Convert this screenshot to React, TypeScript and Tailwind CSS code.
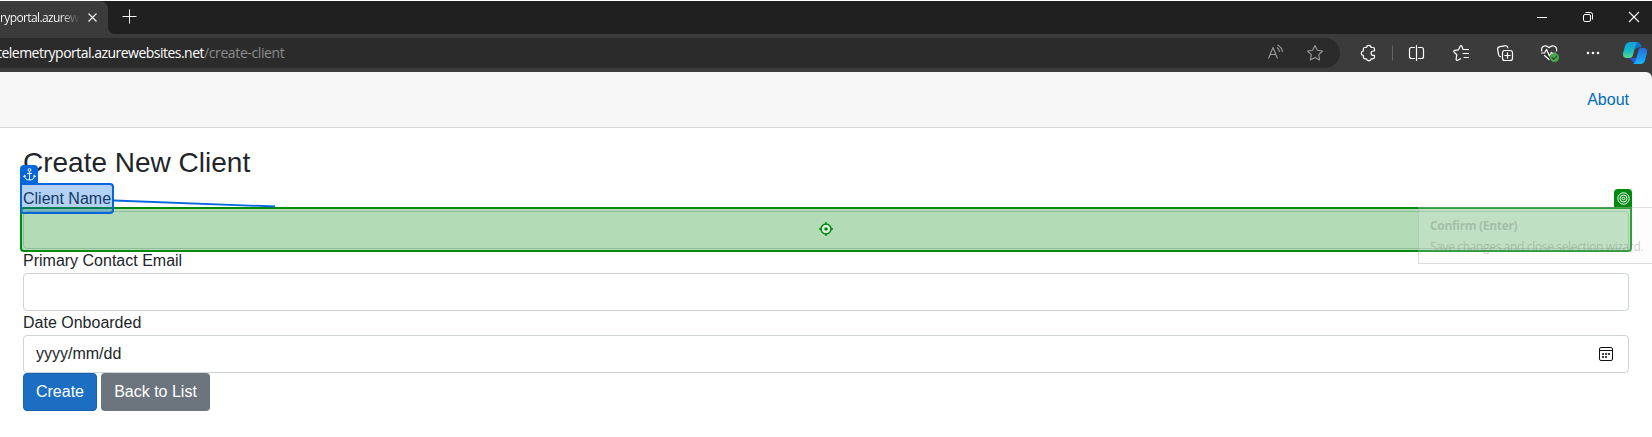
import React from "react";

function TabStrip() {
  return (
    <div className="relative flex h-[33px] bg-[#202020]">
      <div className="relative flex h-full w-[108px] items-center rounded-tr-lg bg-[#3b3b3b]">
        <span className="block h-[20px] w-[81px] bg-linear-to-r from-white from-75% to-[#3b3b3b] to-98% bg-clip-text font-['Open_Sans',sans-serif] text-[12px] leading-[20px] font-medium tracking-[-0.62px] whitespace-nowrap text-transparent">
          ryportal.azurew
        </span>
        <svg className="ml-[6px] h-[11px] w-[11px]" viewBox="0 0 11 11" fill="none" stroke="#eee" strokeWidth="1.2">
          <path d="M1.5 1.500l8 8M9.500 1.500l-8 8" />
        </svg>
      </div>
      <svg className="h-[33px] w-[40px]" viewBox="0 0 40 33" fill="none">
        <path d="M0 33V25Q0 33 8 33Z" fill="#3b3b3b" />
        <path d="M21.500 8.500v14M14.500 15.500h14" stroke="#f4f4f4" />
      </svg>
      <svg className="ml-auto h-[33px] w-[120px]" viewBox="0 0 120 33" fill="none" stroke="#fff">
        <path d="M5 16.500h10" />
        <rect x="51.500" y="13.500" width="7" height="7" rx="1.500" />
        <path d="M53.500 11.500h5q2 0 2 2v5" />
        <path d="M97 11l10 10M107 11l-10 10" strokeWidth="1.100" />
      </svg>
    </div>
  );
}

function Toolbar() {
  return (
    <div className="flex h-[38px] bg-[#3b3b3b] pt-1">
      <div className="flex h-[30px] w-[1340px] items-center rounded-r-full bg-[#2b2b2b]">
        <div className="-ml-[3px] font-['Open_Sans',sans-serif] text-[14px] leading-[30px] font-medium tracking-[-0.52px] whitespace-nowrap text-white">
          telemetryportal.azurewebsites.net<span className="font-normal tracking-[-0.38px] text-[#8b8b8b]">/create-client</span>
        </div>
        <svg className="ml-auto h-[30px] w-[80px] shrink-0" viewBox="0 0 80 30" fill="none" stroke="#9a9a9a" strokeWidth="1.100" strokeLinejoin="round">
          <path d="M8.500 20.500L13 9.500l4.500 11M10 16.500h6" />
          <path d="M17 9.500q2.300 1.500 2.500 4.500M17.500 7q4.500 2.300 5 7" />
          <path d="M55 7.500l2.300 4.800 5.200.7-3.800 3.700.9 5.300-4.600-2.500-4.600 2.500.9-5.300-3.800-3.700 5.200-.7z" />
        </svg>
      </div>
      <svg className="h-[34px] w-[312px]" viewBox="1340 38 312 34" fill="none" stroke="#fff" strokeWidth="1.200" strokeLinecap="round" strokeLinejoin="round">
        <path d="M1365 47.500h1.500q.2-2.200 2.300-2.200t2.300 2.200h1.700q1.700 0 1.700 1.700v1.800h-1.200a2.200 2.200 0 0 0 0 4.400h1.200v1.700q0 1.700-1.700 1.700h-1.700q-.2 2-2.300 2t-2.300-2H1365q-1.700 0-1.700-1.700v-1.700q-2-.2-2-2.200t2-2.200v-1.800q0-1.700 1.700-1.700z" />
        <path d="M1392.500 45.500v15" stroke="#626262" strokeLinecap="butt" strokeWidth="1" />
        <path d="M1413.500 47.500h-2q-2 0-2 2v7q0 2 2 2h2M1419.500 47.500h2q2 0 2 2v7q0 2-2 2h-2M1416.500 45.500v15M1413.500 47.500h1M1418.500 47.500h1M1413.500 58.500h1M1418.500 58.500h1" />
        <path d="M1463 49.500l-1-3q-1-2-2 0l-1.500 3.300-3.600.6q-2 .4-.7 1.800l2.600 2.500-.7 4.300q0 2 1.700 1.200l2.700-1.500M1464 49.500h4.500M1463 53.500h5.500M1464 57.500h4.500" strokeWidth="1.200" />
        <g strokeWidth="1.200">
          <rect x="1502.500" y="50.500" width="10" height="10" rx="2.300" />
          <path d="M1507.500 52.800v5.400M1504.800 55.500h5.400M1507.800 47.800q-.5-2.500-3-2l-5 .9q-2.500.5-2.100 3l.9 5q.4 2 2 2" />
        </g>
        <g strokeWidth="1.200">
          <path d="M1541.700 51q-.8-3.800 2.500-5 2.800-.7 4.800 1.700 2.200-2.400 5-1.700 3.300 1.200 2.500 5M1541.500 53h3l2-3.500 3 6.500 2-3.700 1 1h3M1544.500 55.500l4.500 4" />
          <circle cx="1554.500" cy="57.500" r="4.500" fill="#49a84c" stroke="none" />
          <path d="M1552.300 57.700l1.600 1.500 2.800-3" stroke="#214c24" />
        </g>
        <g fill="#fff" stroke="none">
          <circle cx="1588" cy="53" r="1.300" />
          <circle cx="1593" cy="53" r="1.300" />
          <circle cx="1598" cy="53" r="1.300" />
        </g>
        <g stroke="none">
          <path d="M1629.500 58h6.500l4.500 6h-4q-3 0-4-3z" fill="#2459dc" />
          <path d="M1633 42h4.500q2.500 0 3.300 2.500l1 3h-4q-2 0-2.800 2.500z" fill="#1471cb" />
          <path d="M1630.500 42h7.500q-1.800.8-2.500 3.500l-2.500 9.500q-.8 3-3.500 3h-3q-4.500-.5-3.300-5.500l2-7q1.200-3.500 5.300-3.500z" fill="url(#copilotLeft)" />
          <path d="M1640 48h4.500q3.300.6 2.500 5l-2 7.500q-1.300 3.500-4.500 3.500h-7.500q2-1 2.700-3.500l2.600-9.500q.7-3 1.700-3z" fill="url(#copilotRight)" />
        </g>
        <defs>
          <linearGradient id="copilotLeft" x1="0" y1="0" x2="0" y2="1">
            <stop stopColor="#12a1dc" />
            <stop offset=".5" stopColor="#13b5c5" />
            <stop offset="1" stopColor="#5bdb91" />
          </linearGradient>
          <linearGradient id="copilotRight" x1="0" y1="0" x2="0" y2="1">
            <stop stopColor="#266ade" />
            <stop offset="1" stopColor="#13b5fa" />
          </linearGradient>
        </defs>
      </svg>
    </div>
  );
}

function SelectionOverlay() {
  return (
    <>
      <div className="absolute top-[207px] left-[20px] flex h-[45px] w-[1612px] items-center justify-center rounded-[4px] rounded-tr-none border-2 border-[#008a0e] bg-[#008a0e]/30">
        <svg className="mb-px h-[14px] w-[14px]" viewBox="0 0 14 14" fill="none" stroke="#008a0e">
          <circle cx="7" cy="7" r="5" fill="#dff0df" strokeWidth="1.500" />
          <circle cx="7" cy="7" r="1.800" fill="#008a0e" stroke="none" />
          <path d="M7 0v3M7 11v3M0 7h3M11 7h3" strokeWidth="1.500" />
        </svg>
      </div>
      <div className="absolute top-[189px] left-[1614px] flex h-[18px] w-[18px] items-center justify-center rounded-t-[4px] bg-[#008a0e]">
        <svg className="h-[13px] w-[13px]" viewBox="0 0 13 13" fill="none" stroke="#fff">
          <circle cx="6.500" cy="6.500" r="5.700" />
          <circle cx="6.500" cy="6.500" r="3.500" />
          <circle cx="6.500" cy="6.500" r="1.300" />
        </svg>
      </div>
      <svg className="absolute top-[196px] left-[114px] h-[14px] w-[164px]" viewBox="0 0 164 14">
        <path d="M0 4.500L161 10.500" stroke="#0366dd" strokeWidth="1.800" />
      </svg>
      <div className="absolute top-[183px] left-[20px] h-[31px] w-[94px] rounded-[4px] rounded-tl-none border-2 border-[#0366dd] bg-[#0366dd]/30" />
      <div className="absolute top-[165px] left-[20px] flex h-[18px] w-[18px] items-center justify-center rounded-t-[4px] bg-[#0366dd]">
        <svg className="h-[13px] w-[13px]" viewBox="0 0 13 13" fill="none" stroke="#fff">
          <circle cx="6.500" cy="2" r="1.400" />
          <path d="M6.500 3.500v8.500M4 5.500h5M1.500 7.500q.3 4.500 5 4.500t5-4.500M.5 9l1-1.800L3 8.500M12.500 9l-1-1.800L10 8.500" />
        </svg>
      </div>
      <div className="absolute top-[207px] left-[1418px] h-[57px] w-[234px] border border-r-0 border-[#999]/30 bg-[#f7f7f7]/20 pl-[11px] font-['Open_Sans',sans-serif] text-[12px] whitespace-nowrap text-[#808080]/40">
        <div className="mt-[8px] leading-[20px] font-bold tracking-[-0.32px]">Confirm (Enter)</div>
        <div className="mt-[1px] leading-[20px] tracking-[-0.35px]">Save changes and close selection wizard.</div>
      </div>
    </>
  );
}

const control = "flex h-[38px] items-center rounded-[4px] border border-[#ced4da] bg-white px-3";

export default function App() {
  return (
    <div className="relative h-[437px] w-[1652px] overflow-hidden bg-white pt-px font-['Liberation_Sans',Arial,sans-serif] text-[16px] leading-6 text-[#212529]">
      <TabStrip />
      <Toolbar />
      <div className="bg-[#3b3b3b]">
        <header className="flex h-[56px] items-center justify-end rounded-tr-[6px] border-b border-[#d6d5d5] bg-[#f7f7f7] pr-[23px] text-[#006bb7]">
          <a className="pt-px">About</a>
        </header>
      </div>
      <main className="flex flex-col px-[23px] pt-[18px]">
        <h3 className="mb-[8px] h-[33px] text-[28px] leading-[34px]">Create New Client</h3>
        <label className="h-6">Client Name</label>
        <div className={control} />
        <label className="h-6">Primary Contact Email</label>
        <div className={control} />
        <label className="h-6">Date Onboarded</label>
        <div className={control}>
          yyyy/mm/dd
          <svg className="mr-[3px] ml-auto h-[14px] w-[14px]" viewBox="0 0 14 14">
            <rect x=".5" y=".5" width="13" height="13" rx="1.500" fill="none" stroke="#111" />
            <path d="M1 3.500h12" stroke="#111" />
            <path d="M3 6h2v2H3zM6 6h2v2H6zM9 6h2v2H9zM3 9h2v2H3zM6 9h2v2H6z" fill="#444" />
          </svg>
        </div>
        <div className="flex gap-1 text-white">
          <button className="h-[38px] w-[74px] rounded-[4px] border border-[#1861ac] bg-[#1b6ec2]">Create</button>
          <button className="h-[38px] w-[109px] rounded-[4px] bg-[#6c757d]">Back to List</button>
        </div>
      </main>
      <SelectionOverlay />
    </div>
  );
}
